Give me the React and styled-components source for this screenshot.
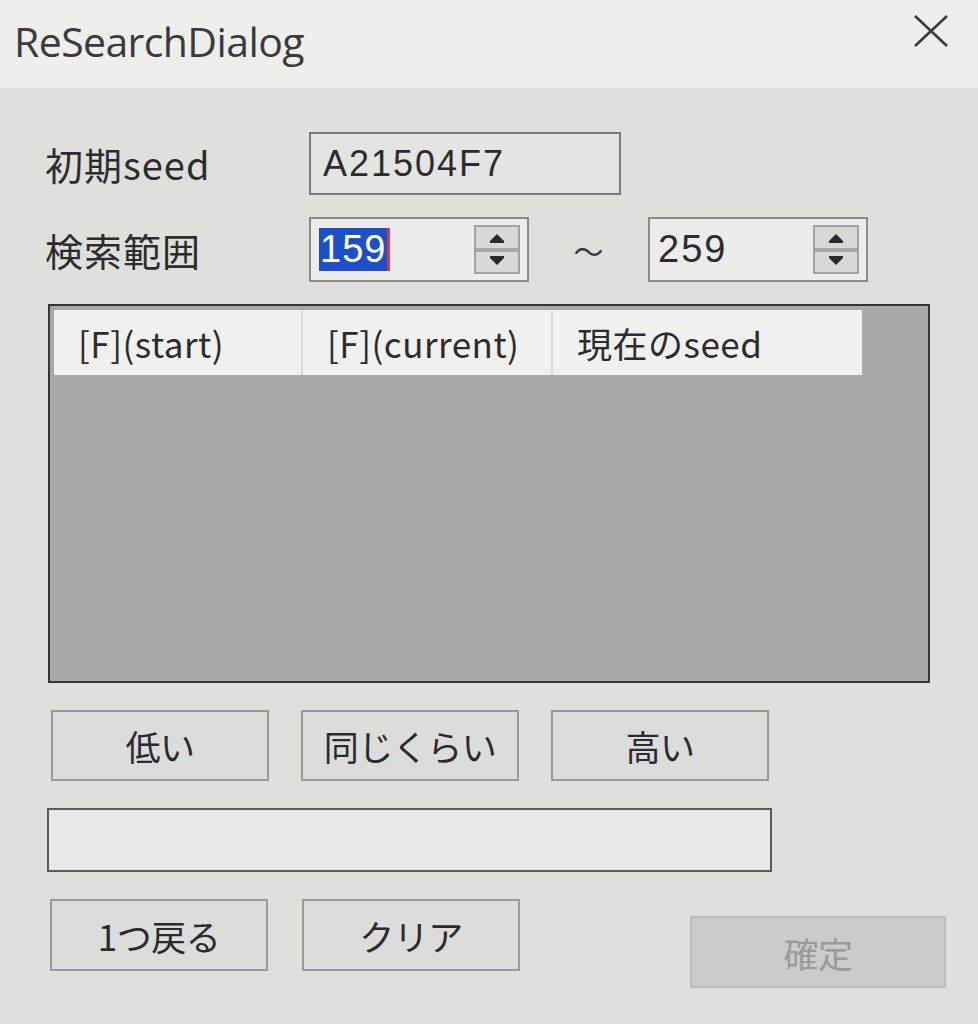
import styled, { createGlobalStyle } from "styled-components";

const GlobalStyle = createGlobalStyle`
  html, body {
    margin: 0;
    padding: 0;
    background: #dfdfdd;
  }
  * { box-sizing: border-box; }
`;

const JP = `"Noto Sans CJK JP", "Liberation Sans", sans-serif`;

const Window = styled.div`
  width: 978px;
  height: 1024px;
  display: flex;
  flex-direction: column;
  background: #dfdfdc;
  overflow: hidden;
`;

const TitleBar = styled.div`
  height: 88px;
  flex: none;
  display: flex;
  align-items: flex-start;
  justify-content: space-between;
  padding: 0 28px 0 14px;
  background: #eeeeeb;
`;

const Title = styled.div`
  margin-top: 13px;
  font-family: "Open Sans", "Noto Sans", sans-serif;
  font-size: 41px;
  line-height: 56px;
  color: #3a3a40;
  letter-spacing: -0.6px;
`;

const CloseBox = styled.div`
  margin-top: 14px;
`;

const Body = styled.div`
  flex: 1;
  display: flex;
  flex-direction: column;
  padding: 44px 0 0 45px;
  font-family: ${JP};
  color: #2c2c30;
`;

const FieldRow = styled.div`
  display: flex;
  align-items: center;
  height: ${(p) => p.$h}px;
  margin-bottom: ${(p) => p.$mb || 0}px;
`;

const Label = styled.div`
  width: 264px;
  font-size: 38px;
  line-height: 1;
  letter-spacing: 1px;
`;

const TextBox = styled.div`
  width: ${(p) => p.$w}px;
  height: 100%;
  border: 2px solid #7a7a7c;
  background: ${(p) => p.$bg || "#e4e4e2"};
  display: flex;
  align-items: center;
  padding-left: 12px;
  font-family: "Liberation Sans", sans-serif;
  font-size: 36px;
  letter-spacing: 2px;
`;

const SpinBox = styled.div`
  width: 220px;
  height: 100%;
  border: 2px solid #8a8a8c;
  background: #ececea;
  display: flex;
  align-items: center;
  justify-content: space-between;
  padding: 6px 7px 6px 8px;
  font-family: "Liberation Sans", sans-serif;
  font-size: 38px;
`;

const Selected = styled.span`
  background: #1d4fc9;
  color: #fff;
  padding: 0 1px;
  border-right: 3px solid #d23a4a;
  line-height: 1.12;
  letter-spacing: 1px;
`;

const Value = styled.span`
  letter-spacing: 2px;
`;

const Spinner = styled.div`
  width: 46px;
  height: 100%;
  display: flex;
  flex-direction: column;
  border: 2px solid #a2a2a4;
  background: #d8d8d6;
`;

const SpinHalf = styled.div`
  flex: 1;
  display: flex;
  align-items: center;
  justify-content: center;
  border-top: ${(p) => (p.$bottom ? "4px solid #a8a8aa" : "none")};
`;

const Arrow = styled.div`
  width: 0;
  height: 0;
  border-left: 7px solid transparent;
  border-right: 7px solid transparent;
  ${(p) =>
    p.$down
      ? "border-top: 7px solid #2a2a2e;"
      : "border-bottom: 7px solid #2a2a2e;"}
  position: relative;
  &::after {
    content: "";
    position: absolute;
    left: -7px;
    width: 14px;
    height: 2px;
    background: #2a2a2e;
    ${(p) => (p.$down ? "top: -9px;" : "top: 7px;")}
  }
`;

const Tilde = styled.div`
  width: 119px;
  text-align: center;
  font-size: 30px;
  color: #3a3a3e;
`;

const ListPanel = styled.div`
  width: 882px;
  height: 379px;
  margin: 22px 0 0 3px;
  border: 2px solid #35353a;
  background: #a9a9ab;
  padding: 4px;
`;

const HeaderRow = styled.div`
  display: flex;
  width: 808px;
  height: 65px;
  background: #f0f0ee;
`;

const HeaderCell = styled.div`
  width: ${(p) => p.$w}px;
  display: flex;
  align-items: center;
  padding-left: 24px;
  font-size: 35px;
  letter-spacing: 0.5px;
  white-space: nowrap;
  border-right: ${(p) => (p.$last ? "none" : "2px solid #dadad8")};
`;

const ButtonRow = styled.div`
  display: flex;
  align-items: flex-start;
  gap: ${(p) => p.$gap}px;
  margin: ${(p) => p.$mt}px 0 0 ${(p) => p.$ml}px;
`;

const Button = styled.div`
  width: ${(p) => p.$w || 218}px;
  height: ${(p) => p.$h || 71}px;
  display: flex;
  align-items: center;
  justify-content: center;
  border: 2px solid ${(p) => (p.$disabled ? "#bdbdbd" : "#9a9a9e")};
  background: ${(p) => (p.$disabled ? "#cbcbcb" : "#dcdcda")};
  color: ${(p) => (p.$disabled ? "#9a9a9c" : "#2a2a30")};
  font-size: 35px;
  letter-spacing: -0.5px;
`;

const StatusField = styled.div`
  width: 725px;
  height: 64px;
  margin: 27px 0 0 2px;
  border: 2px solid #5a5a5e;
  background: #e8e8e6;
`;

function CloseIcon() {
  return (
    <svg width="38" height="34" viewBox="0 0 38 34">
      <path d="M3 2 L35 32 M35 2 L3 32" stroke="#3a3a40" strokeWidth="2.6" fill="none" />
    </svg>
  );
}

function Spin() {
  return (
    <Spinner>
      <SpinHalf>
        <Arrow />
      </SpinHalf>
      <SpinHalf $bottom>
        <Arrow $down />
      </SpinHalf>
    </Spinner>
  );
}

export default function App() {
  return (
    <>
      <GlobalStyle />
      <Window>
        <TitleBar>
          <Title>ReSearchDialog</Title>
          <CloseBox>
            <CloseIcon />
          </CloseBox>
        </TitleBar>
        <Body>
          <FieldRow $h={63} $mb={22}>
            <Label>初期seed</Label>
            <TextBox $w={312}>A21504F7</TextBox>
          </FieldRow>
          <FieldRow $h={65}>
            <Label>検索範囲</Label>
            <SpinBox>
              <Selected>159</Selected>
              <Spin />
            </SpinBox>
            <Tilde>〜</Tilde>
            <SpinBox>
              <Value>259</Value>
              <Spin />
            </SpinBox>
          </FieldRow>
          <ListPanel>
            <HeaderRow>
              <HeaderCell $w={249}>[F](start)</HeaderCell>
              <HeaderCell $w={250}>[F](current)</HeaderCell>
              <HeaderCell $w={309} $last>
                現在のseed
              </HeaderCell>
            </HeaderRow>
          </ListPanel>
          <ButtonRow $gap={32} $mt={27} $ml={6}>
            <Button>低い</Button>
            <Button>同じくらい</Button>
            <Button>高い</Button>
          </ButtonRow>
          <StatusField />
          <ButtonRow $gap={34} $mt={27} $ml={5}>
            <Button $h={72}>1つ戻る</Button>
            <Button $h={72}>クリア</Button>
            <Button $w={256} $h={72} $disabled style={{ marginLeft: 136, marginTop: 17 }}>
              確定
            </Button>
          </ButtonRow>
        </Body>
      </Window>
    </>
  );
}
